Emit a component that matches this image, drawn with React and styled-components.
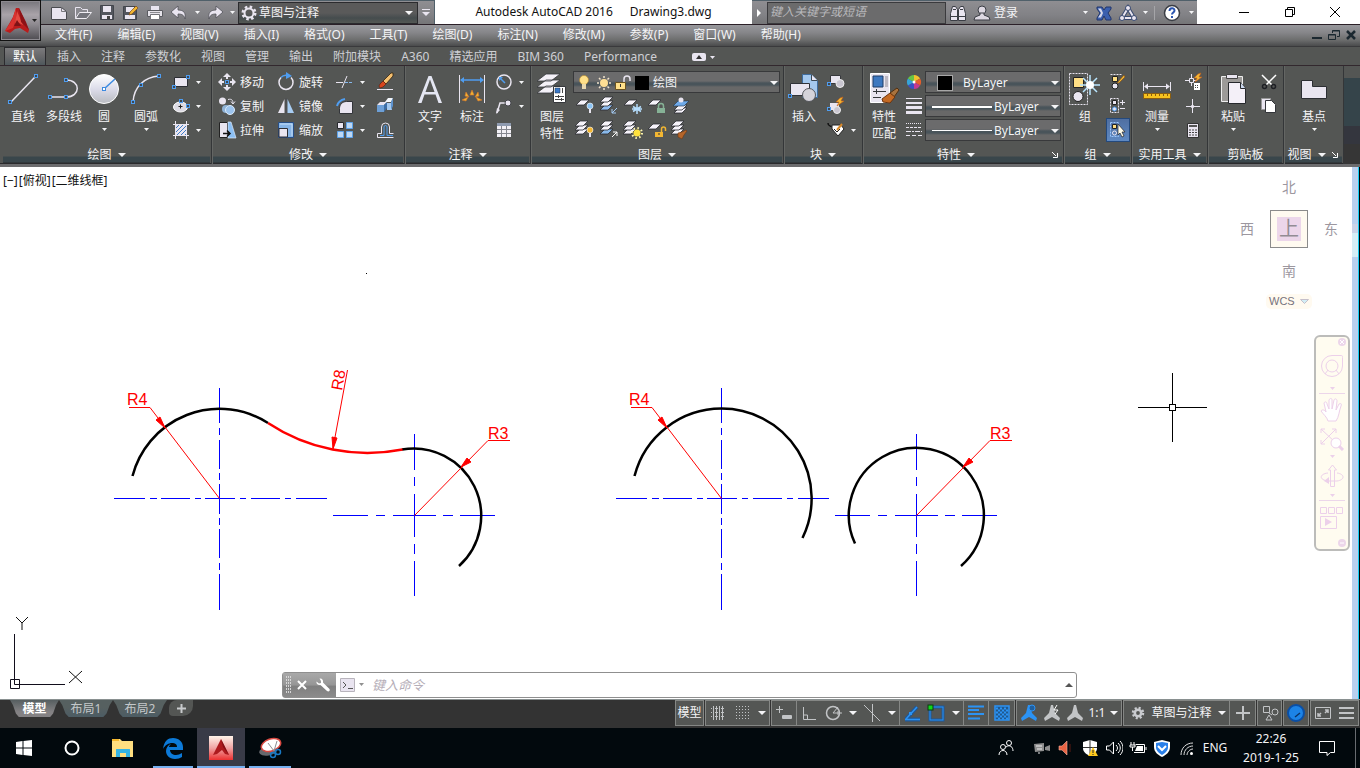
import React from "react";
import styled, { createGlobalStyle, css } from "styled-components";

const GlobalStyle = createGlobalStyle`
  * { box-sizing: border-box; }
  html, body { margin: 0; }
  body {
    font: 12px/16px "Noto Sans", "Noto Sans CJK SC", sans-serif;
    color: #f4f4f6;
    background: #545654;
  }
  button, input, select { font: inherit; color: inherit; }
`;

const INK = "#e9e5f0";
const BLUE = "#4f9df0";
const GOLD = "#f2b632";

/* ---------- shared parts ---------- */

const App = styled.div`
  min-height: 100vh;
  display: flex;
  flex-direction: column;
  overflow: hidden;
`;

const Button = styled.button`
  border: 0;
  padding: 0;
  background: none;
  display: flex;
  flex: none;
  align-items: center;
  justify-content: center;
  width: ${(p) => (p.$w ? `${p.$w}px` : "auto")};
  white-space: nowrap;
`;

const Drawn = styled.svg`
  display: block;
  flex: none;
  fill: none;
`;

function Ico({ w = 24, h = 24, children }) {
  return (
    <Drawn width={w} height={h} viewBox={`0 0 ${w} ${h}`} aria-hidden="true">
      {children}
    </Drawn>
  );
}

function Caret({ big, color = "#f4f4f6" }) {
  return big ? (
    <Ico w={8} h={4}><path d="M0 0h8L4 4z" fill={color} /></Ico>
  ) : (
    <Ico w={5} h={3}><path d="M0 0h5L2.5 3z" fill={color} /></Ico>
  );
}

/* ---------- header ---------- */

const Header = styled.header`
  display: grid;
  grid-template-columns: 41px 1fr;
  grid-template-rows: 25px 21px;
  background: linear-gradient(#98989c, #98989c 25px, #858588 33px, #6c6d6d 40px, #4a4b4c);
`;

const AppButton = styled(Button)`
  grid-row: 1 / 3;
  align-self: start;
  width: 41px;
  height: 41px;
  gap: 3px;
  border: 1px solid #111;
  box-shadow: inset 0 0 0 1px #8d8a90;
  background: linear-gradient(#77757b, #a9a3a9 35%, #8e8a90 60%, #4d4b50);
`;

const TitleBar = styled.div`
  display: flex;
  min-width: 0;
  background: #fff;
  border-bottom: 1px solid #2b2028;
`;

const barSkin = css`
  display: flex;
  align-items: center;
  border-top: 1px solid #50606a;
  background: linear-gradient(#8f8e92, #828286 60%, #757577);
`;

const QuickAccess = styled.div`
  ${barSkin}
  flex: none;
  width: 394px;
  padding-left: 6px;
  border-right: 1px solid #50606a;
`;

const Workspace = styled.label`
  display: flex;
  align-items: center;
  width: 180px;
  height: 22px;
  padding: 0 4px 0 2px;
  gap: 2px;
  border: 1px solid #2b2b2e;
  background: linear-gradient(#5a5a5a 0 50%, #454c4e 75%, #545854);
`;

const Select = styled.select`
  appearance: none;
  flex: 1;
  min-width: 0;
  border: 0;
  padding: 0;
  background: transparent;
  line-height: 16px;
`;

const Title = styled.h1`
  flex: 1;
  margin: 0;
  display: flex;
  align-items: center;
  justify-content: center;
  gap: 17px;
  font-size: 12px;
  font-weight: 400;
  color: #111;
  white-space: nowrap;
`;

const InfoCenter = styled.div`
  ${barSkin}
  flex: none;
  width: 445px;
`;

const Search = styled.input`
  width: 179px;
  height: 22px;
  border: 1px solid #3a3a3d;
  padding: 0 2px 2px;
  background: #6b6b6c;
  font-style: italic;
  &::placeholder { color: #b9b9bc; opacity: 1; }
`;

const Divider = styled.span`
  width: 1px;
  height: 14px;
  margin: 0 4px;
  background: #a5a5a8;
`;

const SignIn = styled(Button)`
  justify-content: flex-start;
  flex: 1;
`;

const WindowControls = styled.div`
  display: flex;
  flex: none;
  padding: 0 2px 0 24px;
  color: #111;
`;

const MenuBar = styled.nav`
  display: flex;
  align-items: center;
  padding: 0 0 1px 14px;
  gap: 25px;
`;

const MenuLink = styled.a`
  color: inherit;
  text-decoration: none;
  white-space: nowrap;
`;

const DocControls = styled.div`
  display: flex;
  margin-left: auto;
  gap: 2px;
  padding-right: 2px;
`;

/* ---------- ribbon ---------- */

const Tabs = styled.nav`
  display: flex;
  align-items: flex-end;
  height: 20px;
  padding-left: 4px;
  background: #545654;
  border-top: 1px solid #3a3a3c;
  border-bottom: 1px solid #32282e;
`;

const Tab = styled.button`
  height: 18px;
  padding: 0 ${(p) => (p.$on ? 8 : 10)}px;
  margin-right: ${(p) => (p.$on ? 1 : 0)}px;
  border: 1px solid ${(p) => (p.$on ? "#2b2b2e" : "transparent")};
  border-width: ${(p) => (p.$on ? "1px 1px 0" : "1px 0 0")};
  background: ${(p) => (p.$on ? "linear-gradient(#7b7b7d, #6a6a6c 45%, #4f585c)" : "none")};
  color: ${(p) => (p.$on ? "#fff" : "#cfd0d4")};
  line-height: 16px;
  white-space: nowrap;
`;

const Ribbon = styled.section`
  display: flex;
  height: 101px;
  padding-left: 2px;
  background: #545654;
  border-bottom: 3px solid #6c6c6e;
  box-shadow: inset 0 -1px #2a2a2c;
`;

const Panel = styled.section`
  flex: none;
  display: flex;
  flex-direction: column;
  width: ${(p) => p.$w}px;
  border-right: 1px solid #343638;
  box-shadow: 1px 0 #646664;
`;

const PanelBody = styled.div`
  flex: 1;
  display: flex;
  padding: 4px 0 0 ${(p) => p.$pad || 0}px;
`;

const PanelFoot = styled.footer`
  display: flex;
  align-items: center;
  height: 19px;
  margin: 0 1px;
  background: linear-gradient(#545654 0 11px, #39464b 12px 17px, #2a2a2c 18px);
`;

const PanelTitle = styled(Button)`
  flex: 1;
  gap: 6px;
`;

const Filler = styled.div`
  flex: 1;
  background: linear-gradient(#545654 12px, #35444a 12px 60px, #34363e 60px 78px, #363636 78px);
`;

const BigButton = styled.button`
  flex: none;
  display: flex;
  flex-direction: column;
  align-items: center;
  width: ${(p) => p.$w}px;
  padding: 0;
  border: 0;
  background: none;
  line-height: 17px;
  white-space: nowrap;
`;

const BigArt = styled.span`
  display: flex;
  align-items: center;
  height: 38px;
`;

const CaretRow = styled.span`
  display: flex;
  align-items: center;
  height: 8px;
`;

const Column = styled.div`
  display: flex;
  flex-direction: column;
  flex: none;
  margin-left: ${(p) => p.$gap || 0}px;
`;

const Row = styled.div`
  display: flex;
  align-items: center;
  height: 24px;
`;

const ToolButton = styled.button`
  display: flex;
  align-items: center;
  width: ${(p) => p.$w || 24}px;
  height: 24px;
  padding: 0;
  gap: 1px;
  border: 0;
  outline: ${(p) => (p.$on ? "1px solid #24497c" : "none")};
  outline-offset: -1px;
  background: ${(p) => (p.$on ? "linear-gradient(#4f6ea0, #5f8ac4)" : "none")};
  white-space: nowrap;
`;

const ToolText = styled.span`
  padding-top: 2px;
`;

const Combo = styled.label`
  display: flex;
  align-items: center;
  width: ${(p) => p.$w}px;
  height: 22px;
  margin: 1px 0;
  padding: 1px 1px 0 ${(p) => p.$pad || 6}px;
  gap: ${(p) => p.$gap || 2}px;
  border: 1px solid #38393b;
  background: linear-gradient(#6b6b6c 0 45%, #49545a 55% 65%, #686868 75%);
`;

const Swatch = styled.span`
  flex: none;
  width: ${(p) => p.$s}px;
  height: ${(p) => p.$s}px;
  margin-right: 2px;
  border: 1px solid ${(p) => p.$edge || "#000"};
  background: #000;
`;

const Stroke = styled.span`
  flex: none;
  width: 60px;
  height: ${(p) => p.$h}px;
  background: #fff;
`;

/* ---------- drawing area ---------- */

const Workarea = styled.main`
  position: relative;
  flex: 1 0 532px;
  display: flex;
  background: #fff;
  color: #111;
`;

const Viewport = styled.div`
  position: relative;
  flex: 1;
`;

const Model = styled.svg`
  position: absolute;
  inset: 0;
  width: 100%;
  height: 100%;
  font-family: "Liberation Sans", Arial, sans-serif;
`;

const ViewLabel = styled.button`
  position: absolute;
  top: 6px;
  left: 3px;
  display: flex;
  gap: 1px;
  padding: 0;
  border: 0;
  background: none;
  line-height: 16px;
`;

const Ucs = styled.div`
  position: absolute;
  left: 8px;
  bottom: 9px;
`;

const ScrollStrip = styled.div`
  flex: none;
  width: 8px;
  border-right: 1px solid #000;
  box-shadow: inset -1px 0 #16cdf3;
  background: linear-gradient(#b8d0ee 57px, #c9d3e8 57px 66px, #d4eef6 66px 90px, #b8d0ee 90px);
`;

const Compass = styled.div`
  position: absolute;
  top: 9px;
  right: 11px;
  display: grid;
  grid-template-columns: 20px 64px 20px;
  grid-template-rows: 22px 62px 22px;
  place-items: center;
  color: #9c979f;
  font-size: 14px;
`;

const Dir = styled.button`
  grid-area: ${(p) => p.$at};
  padding: 0;
  border: 0;
  background: none;
  font-size: 14px;
`;

const CubeFace = styled.button`
  grid-area: 2 / 2;
  width: 38px;
  height: 38px;
  padding: 6px;
  border: 1px solid #8b8b8b;
  background: #fffaf0;
`;

const CubeText = styled.span`
  display: block;
  background: #ecd6ea;
  color: #928c94;
  font-size: 20px;
  line-height: 24px;
`;

const Wcs = styled.button`
  position: absolute;
  top: 127px;
  right: 40px;
  display: flex;
  align-items: center;
  gap: 5px;
  width: 46px;
  height: 15px;
  padding: 0 3px;
  border: 0;
  border-radius: 5px;
  background: #fffaf0;
  color: #77727c;
  font: 11px/15px "Liberation Sans", Arial, sans-serif;
`;

const NavBar = styled.nav`
  position: absolute;
  top: 168px;
  right: 2px;
  display: flex;
  flex-direction: column;
  align-items: center;
  width: 36px;
  height: 216px;
  border: 2px solid #bcbcba;
  border-radius: 6px;
  background: #fffcf0;
`;

const NavButton = styled.button`
  display: flex;
  align-items: center;
  justify-content: ${(p) => (p.$end ? "flex-end" : "center")};
  width: 100%;
  height: ${(p) => p.$h}px;
  padding: 0;
  border: 0;
  background: none;
`;

const NavRule = styled.span`
  flex: none;
  width: 26px;
  height: 1px;
  background: #ecd6ea;
`;

const CommandLine = styled.form`
  position: absolute;
  left: 282px;
  right: 275px;
  bottom: 1px;
  display: flex;
  align-items: center;
  height: 26px;
  border: 1px solid #8f8f8f;
  border-radius: 3px;
  background: #fff;
`;

const CommandGrip = styled.div`
  display: flex;
  align-items: center;
  align-self: stretch;
  width: 53px;
  background: linear-gradient(#a9a9a9, #969696 50%, #7f7f7f 55%, #8b8b8b);
`;

const CommandInput = styled.input`
  flex: 1;
  min-width: 0;
  border: 0;
  padding: 0 4px;
  background: none;
  font-size: 13px;
  font-style: italic;
  &::placeholder { color: #b5aeb8; opacity: 1; }
`;

/* ---------- status bar ---------- */

const StatusBar = styled.footer`
  display: flex;
  justify-content: space-between;
  height: 29px;
  background: #333;
  border-top: 1px solid #899090;
`;

const Layouts = styled.nav`
  display: flex;
  padding-left: 10px;
`;

const LayoutTab = styled.button`
  width: ${(p) => p.$w}px;
  height: 17px;
  padding: 0;
  border: 0;
  clip-path: polygon(0 0, 100% 0, 94% 30%, 88% 80%, 82% 100%, 18% 100%, 12% 80%, 6% 30%);
  background: ${(p) => (p.$on ? "linear-gradient(#565e60, #848284 70%)" : "linear-gradient(#566060 45%, #4c5c64)")};
  color: ${(p) => (p.$on ? "#fff" : "#c4c8ca")};
  font-weight: ${(p) => (p.$on ? 700 : 400)};
  line-height: 16px;
`;

const AddTab = styled(Button)`
  width: 24px;
  height: 16px;
  margin-left: 2px;
  border-radius: 8px 0 10px 4px;
  background: #545654;
`;

const Toggles = styled.div`
  display: flex;
  padding: 0 1px 1px 0;
`;

const ToggleGroup = styled.div`
  display: flex;
  align-items: center;
  justify-content: space-around;
  flex: none;
  width: ${(p) => p.$w}px;
  height: 26px;
  margin-left: ${(p) => (p.$join ? -1 : 1)}px;
  padding-left: ${(p) => p.$pad || 0}px;
  border: 1px solid #858785;
  background: #545654;
`;

/* ---------- taskbar ---------- */

const Taskbar = styled.footer`
  display: flex;
  height: 40px;
  background: #02090d;
`;

const Task = styled.button`
  position: relative;
  display: flex;
  align-items: center;
  justify-content: center;
  width: ${(p) => p.$w || 48}px;
  padding: 0;
  border: 0;
  background: ${(p) => (p.$on ? "#393b47" : "none")};
  &::after {
    content: "";
    position: absolute;
    right: ${(p) => (p.$on ? 0 : 4)}px;
    bottom: 0;
    left: ${(p) => (p.$on ? 0 : 4)}px;
    height: 2px;
    background: ${(p) => (p.$open || p.$on ? "#76b0f0" : "none")};
  }
`;

const Tray = styled.div`
  display: flex;
  align-items: center;
  margin-left: auto;
`;

const Clock = styled.time`
  width: 78px;
  text-align: center;
  line-height: 19px;
`;

const DesktopEdge = styled.span`
  width: 5px;
  height: 40px;
  margin-left: 11px;
  border-left: 1px solid #686c70;
`;

/* ---------- icons ---------- */

const Node = ({ x, y }) => (
  <rect x={x - 1.5} y={y - 1.5} width="3" height="3" fill="#3f4750" stroke={BLUE} />
);
const Sheet = ({ x, y, fill = "#f6f3fa" }) => (
  <path d={`M${x + 5} ${y}h8l-5 5h-8z`} fill={fill} stroke="#2b2c32" strokeWidth=".8" />
);
const Stack = ({ x = 3, y = 4, fill }) => (
  <g><Sheet x={x} y={y + 8} fill={fill} /><Sheet x={x} y={y + 4} /><Sheet x={x} y={y} /></g>
);
const Bulb = ({ x, y, c }) => (
  <g><circle cx={x} cy={y} r="3" fill={c} stroke="#fff" strokeWidth=".6" /><path d={`M${x - 1} ${y + 3}h2v4h-2z`} fill={INK} /></g>
);
const Bolt = ({ x, y }) => (
  <path d={`M${x + 4} ${y}l3-1-2 4h3l-7 5 2-4h-3z`} fill={GOLD} stroke="#c25a18" strokeWidth=".6" />
);
const Brush = ({ x, y }) => (
  <path d={`M${x} ${y + 3}l4-1 4-2 1 1-3 4-2 4-4-2z`} fill="#b5652a" stroke="#6d3712" strokeWidth=".6" />
);
const Dashed = ({ d, c = INK }) => <path d={d} stroke={c} strokeDasharray="2 1" />;

const Logo = ({ w = 24, h = 26 }) => (
  <Drawn width={w} height={h} viewBox="0 0 24 26" aria-hidden="true">
    <path d="M11 0h3l10 22-1 3-8-5-5 1-5 4-5-2L8 9z" fill="#b91c1c" />
    <path d="M11 0L7 12 0 23l8-3 3-8z" fill="#d8322f" />
    <path d="M12 3l-2 13 2-2 6 3z" fill="#e34b42" />
    <path d="M14 0l2 14 8 8-3-8z" fill="#8d1216" />
    <path d="M12 12l4 6H9z" fill="#7d1316" />
  </Drawn>
);

const icons = {
  new: <Ico><path d="M4.500 6.500h10l5 4v8h-15z" fill={INK} stroke="#4a4b50" /><path d="M14.500 6.500v4h5" stroke="#77777c" /></Ico>,
  open: <Ico><path d="M4.500 17.500v-11h5l2 2h5v3" fill="#8a8a90" stroke={INK} /><path d="M4.500 17.500l4-6h12l-5 6z" fill="#74757c" stroke="#f0eef4" /></Ico>,
  save: <Ico><path d="M5.500 4.500h13v14h-13z" fill="#53565e" stroke="#42454c" /><path d="M8 5h8v6H8z" fill={INK} /><path d="M7 14h10v4H7z" fill={INK} /><path d="M12 15h3v3h-3z" fill="#444" /></Ico>,
  saveAs: <Ico><path d="M4.500 5.500h13v13h-13z" fill="#53565e" stroke="#42454c" /><path d="M7 6h8v5H7zM6 14h10v4H6z" fill={INK} /><path d="M10 14l1-3 6-6 2 2-6 6z" fill={GOLD} stroke="#7c4a18" strokeWidth=".7" /></Ico>,
  print: <Ico><path d="M7.500 4.500h9v5h-9z" fill={INK} stroke="#85868c" /><path d="M4.500 9.500h15v6h-15z" fill="#e6e3ea" stroke="#5a5b60" /><path d="M7.500 13.500h9v5h-9z" fill="#fff" stroke="#73747a" /><path d="M7 11.500h10" stroke="#8a8b90" /></Ico>,
  undo: <Ico><path d="M11 5v4c6 0 8 3 7 9-1-4-3-5-7-5v4l-7-6z" fill={INK} stroke="#505158" strokeWidth=".8" /></Ico>,
  redo: <Ico><path d="M13 5v4c-6 0-8 3-7 9 1-4 3-5 7-5v4l7-6z" fill={INK} stroke="#505158" strokeWidth=".8" /></Ico>,
  gear: <Ico w={16} h={16}><circle cx="8" cy="8" r="6" stroke={INK} strokeWidth="3" strokeDasharray="2.4 2.3" /><circle cx="8" cy="8" r="4.500" stroke={INK} strokeWidth="2" /></Ico>,
  smallGear: <Ico w={14} h={14}><circle cx="7" cy="7" r="5" stroke="#c9cbcf" strokeWidth="2.500" strokeDasharray="2 1.930" /><circle cx="7" cy="7" r="3.200" stroke="#c9cbcf" strokeWidth="2.600" /></Ico>,
  play: <Ico w={15} h={24}><path d="M5 8v8l4-4z" fill="#fff" /></Ico>,
  more: <Ico w={8} h={8}><path d="M0 .5h8" stroke={INK} /><path d="M0 3h8L4 7z" fill={INK} /></Ico>,
  find: <Ico><path d="M4.500 19.500v-7l2-7h3l2 3v11zM12.500 19.500v-11l2-3h3l2 7v7z" fill={INK} stroke="#3a3d44" /><path d="M5 15.500h6M13 15.500h6M7 8.500h3M14 8.500h3" stroke="#3a3d44" /></Ico>,
  user: <Ico><circle cx="12" cy="9" r="4" fill="#ddd8e2" stroke="#3a3d44" /><path d="M10 12h4v2l5 2 1 3H4l1-3 5-2z" fill="#ddd8e2" stroke="#3a3d44" /></Ico>,
  exchange: <Ico><path d="M5 6h5l2 3 2-3h5v2l-3 4 3 5v2h-5l-2-4-2 4H5v-2l3-5-3-4z" fill="#3a5fae" stroke="#22366c" /><path d="M6 7.500h3l2 4.500-2 4.500H6l3-4.500z" fill="#d5d8ea" /></Ico>,
  triad: <Ico><path d="M12 7L6 17h12z" stroke="#394a70" strokeWidth="4" /><path d="M12 7L6 17h12z" stroke={INK} strokeWidth="2" /><circle cx="12" cy="7" r="2.500" fill={INK} stroke="#394a70" /><circle cx="6" cy="17" r="2.500" fill={INK} stroke="#394a70" /><circle cx="18" cy="17" r="2.500" fill={INK} stroke="#394a70" /></Ico>,
  help: <Ico><circle cx="12" cy="12" r="7.500" fill="#fff" stroke="#3a3d44" strokeWidth="1.500" /><path d="M9.500 10c0-3.500 5-3.500 5-.5 0 2-2.500 2-2.500 4M12 15v2" stroke="#2b55b0" strokeWidth="2" /></Ico>,

  line: <Ico w={32} h={34}><path d="M4 30L28 5" stroke={INK} strokeWidth="1.500" /><Node x={3} y={30} /><Node x={29} y={4} /></Ico>,
  pline: <Ico w={32} h={34}><path d="M3 25h15M18 8c15 0 15 17 0 17" stroke={INK} strokeWidth="1.500" /><Node x={2} y={25} /><Node x={18} y={25} /><Node x={18} y={8} /></Ico>,
  circle: <Ico w={34} h={34}><defs><linearGradient id="disc" x2="0" y2="1"><stop offset="0" stopColor="#fff" /><stop offset=".5" stopColor="#dcdcea" /><stop offset="1" stopColor="#b9bbc0" /></linearGradient></defs><circle cx="17" cy="17" r="14.500" fill="url(#disc)" stroke="#fff" /><path d="M17 17L28 7" stroke="#3c8ae0" strokeWidth="1.500" /><rect x="15.500" y="15.500" width="3" height="3" fill="#fff" stroke="#3c8ae0" /></Ico>,
  arc: <Ico w={32} h={34}><path d="M3 30C4 15 14 5 29 4" stroke={INK} strokeWidth="1.500" /><Node x={3} y={30} /><Node x={11} y={13} /><Node x={29} y={4} /></Ico>,
  rect: <Ico><path d="M5.500 7.500h13v9h-13z" fill={INK} stroke="#2b2d33" /><Node x={5} y={17} /><Node x={19} y={7} /></Ico>,
  ellipse: <Ico><ellipse cx="11.500" cy="13" rx="7" ry="5" fill="#dddbe4" stroke="#fff" /><path d="M9.500 12.500h4M11.500 10.500v4" stroke="#222" /><Node x={12} y={7} /><Node x={19} y={12} /></Ico>,
  hatch: <Ico><path d="M7 7h10v10H7z" fill="#e9e5f0" /><path d="M7 10l3-3M7 14l7-7M8 17l9-9M12 17l5-5M16 17l1-1" stroke="#3f7cc4" /><path d="M6.500 3v18M17.500 3v18M4 6.500h16M4 17.500h16" stroke={INK} /></Ico>,
  move: <Ico><path d="M12 6v3M12 15v3M6 12h3M15 12h3" stroke={INK} strokeWidth="2" /><path d="M12 3l-4 4h8zM12 21l-4-4h8zM3 12l4-4v8zM21 12l-4-4v8z" fill={INK} /><Node x={12} y={12} /></Ico>,
  copy: <Ico><circle cx="7.500" cy="7" r="3.500" fill={INK} /><circle cx="11" cy="15" r="4" fill="#8fb2d6" /><circle cx="15" cy="16" r="4.500" fill="#9cc4ee" stroke="#dcebfa" /><path d="M13 5.500c4-1 5 1 5 4M16 7.500l2 2.500 2-2.500" stroke={INK} /></Ico>,
  stretch: <Ico><path d="M4.500 4.500h8v15h-8z" fill={INK} stroke="#222" /><path d="M13 4h3l5 16h-8z" fill="#8cc0f4" stroke="#dceafa" strokeWidth=".7" /><path d="M8 15.500h6M12 12.500l3 3-3 3" stroke="#111" strokeWidth="1.500" /></Ico>,
  rotate: <Ico><path d="M7 7.500A7 7 0 1 0 17 7.500" stroke={INK} strokeWidth="1.500" /><path d="M7 7.500C9 5 12 5 14 5.500" stroke={BLUE} strokeWidth="1.500" /><path d="M12 2l6 4-6 3z" fill={BLUE} /></Ico>,
  mirror: <Ico><path d="M10.500 5v14H4z" fill={INK} /><path d="M13.500 5v14H20z" fill="#a8cdf3" /><path d="M12 4v16" stroke="#4c4d52" /></Ico>,
  scale: <Ico><path d="M4.500 4.500h15v15h-15z" fill="#86b4e6" stroke="#284f86" /><path d="M5 10.500h8.500V19H5z" fill={INK} stroke="#2e2f34" /><path d="M6 6h12v12" stroke="#c6def6" /></Ico>,
  trim: <Ico><path d="M3 12.500h7M9 18l5-12" stroke={INK} /><path d="M12 12.500h8" stroke="#86b8ec" strokeDasharray="3 1" /></Ico>,
  fillet: <Ico><path d="M6.500 19.500v-5c0-4 3-7 7-7h6v12z" fill={INK} stroke="#33353a" /><path d="M4 12c1-4 3-6 8-7" stroke={BLUE} strokeWidth="2" /></Ico>,
  array: <Ico><path d="M4.500 4.500h6v6h-6z" fill={INK} stroke="#26282c" /><path d="M13.500 4.500h6v6h-6zM4.500 13.500h6v6h-6zM13.500 13.500h6v6h-6z" fill="#bed8f4" stroke="#5ea3ea" /></Ico>,
  erase: <Ico><path d="M4 19.500h16" stroke={INK} /><path d="M10 11L18 3h2v3l-7 8z" fill="#f5c070" stroke="#33230f" strokeWidth=".8" /><path d="M7 14l3-3 3 3-3 3-3 1-1-2z" fill="#d8451d" stroke="#5b1b0b" strokeWidth=".6" /></Ico>,
  explode: <Ico><path d="M4 11h7v7H4z" fill="#6d9fd6" /><path d="M4 11l3-3h7l-3 3z" fill={INK} /><path d="M11 11l3-3v6l-3 4z" fill="#3d6fa8" /><path d="M14 9h5v7h-5z" fill="#a4c8ee" /><path d="M12 8l3-4h5l-2 4z" fill="#f4f7fb" /><path d="M18 8l2-4v8l-2 4z" fill="#5d93cf" /></Ico>,
  offset: <Ico><path d="M4.500 19.500h16M4.500 19.500v-4h4V9a4 4 0 0 1 8 0v6.500h4" stroke={INK} /><path d="M7 17.500h4V9a1.500 1.500 0 0 1 3 0v8.500h6" stroke={BLUE} /></Ico>,
  text: <Ico w={32} h={34}><path d="M4 31L14.500 4h3L28 31h-3.500l-3-8.500h-11L7.500 31zM11.500 20h9L16 7.500z" fill="#e4e6f2" /></Ico>,
  dim: <Ico w={32} h={34}><path d="M3.500 3v28M28.500 3v28" stroke={INK} /><path d="M5 8h22" stroke={BLUE} strokeWidth="1.500" /><path d="M4 8l4-3v6zM28 8l-4-3v6z" fill={BLUE} /><path d="M16 18l2 5h-4zM10 20l3 5-4-1zM22 20l-3 5 4-1zM6 28l6-3-2 4zM26 28l-6-3 2 4z" fill={GOLD} stroke="#d9762a" strokeWidth=".6" /></Ico>,
  radius: <Ico><circle cx="12" cy="12" r="7" stroke={INK} strokeWidth="1.500" /><path d="M13 13L8 8" stroke={BLUE} strokeWidth="1.500" /><path d="M7 7h4l-4 4z" fill={BLUE} /></Ico>,
  leader: <Ico><path d="M5 19l3-10h6" stroke={INK} strokeWidth="1.500" /><path d="M4 20l1-6 3 2z" fill={INK} /><circle cx="16" cy="9" r="3" fill={INK} stroke="#44454a" /></Ico>,
  table: <Ico><path d="M5 5h14v14H5z" fill="#f3f1f6" /><path d="M5 5h14v3H5z" fill="#8f9bb0" /><path d="M5 11.500h14M5 15.500h14M9.500 8v11M14.500 8v11" stroke="#868890" /></Ico>,
  layers: <Ico w={34} h={34}><g stroke="#36383c" strokeWidth=".8" fill="#f4f1f8"><path d="M11 14h14l-9 7H2zM11 8h14l-9 7H2zM11 2h14l-9 7H2z" /></g><path d="M18.500 14.500h12v16h-12z" fill="#fff" stroke="#36383c" /><path d="M20 16h5v5h-5z" fill="#3a78c8" stroke="#234" strokeWidth=".5" /><path d="M27.500 16v5M20 24.500h9M20 27.500h9M23.500 23v3M26.500 26v3" stroke="#444" /></Ico>,
  lyOff: <Ico><Sheet x={3} y={6} /><Bulb x={17} y={12} c="#8cc4f4" /></Ico>,
  lyIso: <Ico><Stack x={3} y={3} fill="#8fbcf0" /><path d="M20 14l-5 5m0-4v4h4" stroke="#a4cbf4" /></Ico>,
  lyFreeze: <Ico><Sheet x={3} y={6} /><path d="M16 10v10M12 12.500l8 5M20 12.500l-8 5M11 15h10" stroke="#b4dcfc" strokeWidth="1.500" /></Ico>,
  lyLock: <Ico><Sheet x={3} y={6} /><path d="M13.500 14v-2a2.500 2.500 0 0 1 5 0v2" stroke="#86b296" strokeWidth="1.500" /><path d="M12 14h8v5h-8z" fill="#86b296" /></Ico>,
  lyCurrent: <Ico><Sheet x={5} y={14} /><Sheet x={5} y={11} /><path d="M9 7h11l-5 5H4z" fill="#6faaea" stroke="#234" strokeWidth=".6" /><circle cx="12" cy="6" r="2.500" fill={INK} /></Ico>,
  lyOn: <Ico><Stack x={2} y={3} /><Bulb x={17} y={12} c={GOLD} /></Ico>,
  lyUniso: <Ico><Stack x={3} y={3} fill="#89b9ea" /><path d="M15 19l5-5m-4 0h4v4" stroke="#fff" /></Ico>,
  lyThaw: <Ico><Stack x={2} y={3} /><circle cx="16" cy="15" r="5" stroke="#fff7b0" strokeDasharray="1.500 2.400" strokeWidth="2" /><circle cx="16" cy="15" r="3.500" fill="#ffe23d" /></Ico>,
  lyUnlock: <Ico><Sheet x={3} y={6} /><path d="M16.500 14v-3a2 2 0 0 1 4 0v2" stroke={GOLD} strokeWidth="1.500" /><path d="M10 14h8v5h-8z" fill={GOLD} /><path d="M14 15v2" stroke="#333" /></Ico>,
  lyMatch: <Ico><Stack x={2} y={3} /><Brush x={9} y={12} /></Ico>,
  bulb: <Ico w={18} h={20}><circle cx="9" cy="7" r="4.500" fill="#ffe08a" stroke="#b5882c" strokeWidth=".6" /><path d="M7 11h4v5H7z" fill="#e9d9b0" /></Ico>,
  sun: <Ico w={18} h={20}><circle cx="9" cy="10" r="4" fill="#ffdf94" /><path d="M9 3v2M9 15v2M2 10h2M14 10h2M4 5l1.500 1.500M12.500 13.500L14 15M14 5l-1.500 1.500M4 15l1.500-1.500" stroke="#f0e2cc" strokeWidth="1.500" /></Ico>,
  unlock: <Ico w={18} h={20}><path d="M9 9V6a3 3 0 0 1 6 0v2" stroke={INK} strokeWidth="1.500" /><path d="M.5 9.500h10v7H.5z" fill="#ffe08a" stroke="#6b5320" /><path d="M5.500 11v3" stroke="#333" /></Ico>,
  insert: <Ico w={34} h={34}><path d="M15.500 2.500h9l6 6v17h-15z" fill="#a4c8ee" stroke="#3f6c9e" /><path d="M24.500 2.500v6h6" fill={INK} stroke="#3b4854" /><path d="M3.500 11.500h19v12h-19z" fill={INK} stroke="#303238" /><circle cx="22" cy="23" r="6.500" fill="#d5d3da" stroke="#55575c" /><Node x={3} y={24} /></Ico>,
  block: <Ico><path d="M6.500 5.500h10v8h-10z" fill={INK} stroke="#36383c" /><circle cx="16" cy="13.500" r="4" fill="#c9c6d0" stroke="#eee" /><Node x={5} y={14} /></Ico>,
  blockEdit: <Ico><path d="M6 9h9v7H6z" fill={INK} /><circle cx="13" cy="16" r="3.500" fill="#c9c6d0" stroke="#eee" /><Node x={5} y={15} /><Bolt x={12} y={4} /></Ico>,
  attr: <Ico><path d="M4 5c0 4 3 2 3 4" stroke="#111" strokeWidth="1.500" /><path d="M8 7h9l3 4-6 7-6-7z" fill="#fff" stroke="#222" /><path d="M10 11l3 3 3-3" stroke="#222" /><path d="M13 12l5-6" stroke="#d98a2a" strokeWidth="2" /></Ico>,
  matchProp: <Ico w={34} h={34}><path d="M3.500 1.500h19v29h-19z" fill={INK} stroke="#fff" /><path d="M6 4h10v11H6z" fill="#3d78c0" stroke="#1e3c66" /><path d="M18 4h3v11h-3z" fill="#bcb8c2" /><path d="M6 19.500h13M6 25.500h8M9.500 17v5" stroke="#36383c" /><path d="M23 21l7-5 2 2-5 7z" fill="#a9733e" stroke="#53300f" /><path d="M15 27l8-6 5 4-5 6-7-1z" fill="#c46a24" stroke="#6b3510" /></Ico>,
  wheel: <Ico w={18}><g transform="translate(9 12)"><path d="M0 0V-7A7 7 0 0 1 6.100-3.500z" fill="#f2c12e" /><path d="M0 0L6.100-3.500A7 7 0 0 1 6.100 3.500z" fill="#e8602c" /><path d="M0 0L6.100 3.500A7 7 0 0 1 0 7z" fill="#c43a90" /><path d="M0 0V7A7 7 0 0 1-6.100 3.500z" fill="#3a50c4" /><path d="M0 0L-6.100 3.500A7 7 0 0 1-6.100-3.500z" fill="#36a4d8" /><path d="M0 0L-6.100-3.500A7 7 0 0 1 0-7z" fill="#68c444" /><circle r="1.500" fill="#fff" /></g></Ico>,
  weights: <Ico w={18}><path d="M1 4.500h16" stroke={INK} /><path d="M1 9h16" stroke={INK} strokeWidth="2" /><path d="M1 13.500h16" stroke={INK} strokeWidth="3" /><path d="M1 18.500h16" stroke={INK} strokeWidth="3" /></Ico>,
  types: <Ico w={18}><path d="M1 5.500h16" stroke={INK} strokeDasharray="1 1" /><path d="M1 9.500h16" stroke={INK} strokeDasharray="3 1" /><path d="M1 13.500h16" stroke={INK} strokeDasharray="5 1 2 1" /><path d="M1 17.500h16" stroke={INK} strokeDasharray="4 2" /></Ico>,
  group: <Ico w={34} h={34}><Dashed d="M1.500 1.500h18v31h-18z" /><path d="M5.500 5.500h10v10h-10z" fill="#ffdf84" stroke="#222" /><circle cx="10" cy="24.500" r="5" fill={INK} stroke="#222" /><path d="M22 3v20M12 13h20M15 6l14 14M29 6L15 20" stroke="#b9e6ff" strokeWidth="1.500" /><circle cx="22" cy="13" r="4" fill="#fff" /></Ico>,
  ungroup: <Ico><Dashed d="M4.500 4.500h12" /><path d="M6.500 6.500h5v5h-5z" fill="#ffdf84" stroke="#222" /><circle cx="9" cy="16" r="3" fill={INK} stroke="#222" /><path d="M11 13l7-8 1 2-6 6z" fill={GOLD} stroke="#7b4718" strokeWidth=".6" /></Ico>,
  groupEdit: <Ico><Dashed d="M4.500 4.500h8v14h-8z" /><path d="M6.500 6.500h4v4h-4z" fill={INK} stroke="#222" /><circle cx="8.500" cy="15" r="2" fill={INK} stroke={BLUE} /><path d="M14 8.500h5M16.500 6v5M14 14.500h5" stroke={INK} /></Ico>,
  groupSel: <Ico><Dashed d="M4.500 4.500h8v14h-8z" c="#9cc8ff" /><path d="M6.500 6.500h4v4h-4z" fill="#ffdf84" stroke="#222" /><circle cx="8.500" cy="15" r="2" stroke={INK} /><path d="M12 6l7 8-3 0 2 4-2 1-2-4-2 2z" fill="#fffbe8" stroke="#222" strokeWidth=".7" /></Ico>,
  measure: <Ico w={32} h={34}><path d="M2.500 10v9M29.500 10v9M4 14.500h24" stroke={INK} /><path d="M3 14.500l4-3v6zM29 14.500l-4-3v6z" fill={INK} /><path d="M2.500 21.500h27v5h-27z" fill="#f7c21e" stroke="#8a5d10" /><path d="M6.500 22v2M10.500 22v2M14.500 22v2M18.500 22v2M22.500 22v2M26.500 22v2" stroke="#8a5d10" /></Ico>,
  quickSel: <Ico><path d="M10.500 4v12M4 10.500h12" stroke={INK} /><path d="M8.500 8.500h4v4h-4z" fill="#545654" stroke={INK} /><path d="M13 13h6v7h-6z" fill="#fff" /><path d="M14 15.500h4M14 17.500h4" stroke="#444" strokeDasharray="1 1" /><Bolt x={13} y={4} /></Ico>,
  point: <Ico><path d="M11.500 5v14M5 12.500h14" stroke={INK} /><path d="M10.500 11.500h2v2h-2z" stroke={INK} /></Ico>,
  calc: <Ico><path d="M6.500 5.500h11v14h-11z" fill={INK} stroke="#333" /><path d="M8 7h8v2H8z" fill="#555" /><path d="M8 12h8M8 14.500h8M8 17h8" stroke="#444" strokeDasharray="2 1" /></Ico>,
  paste: <Ico w={32} h={34}><path d="M4.500 4.500h21v25h-21z" fill="#9c9a98" stroke="#eee" /><path d="M9.500 2.500h11v4h-11z" fill={INK} stroke="#444" /><path d="M11.500 10.500h12l5 6v15h-17z" fill="#f4f0f8" stroke="#26282c" /><path d="M23.500 10.500v6h5" fill="#ccd8ee" stroke="#26282c" /></Ico>,
  cut: <Ico><path d="M5 5l10 10M19 5L9 15" stroke="#fff" strokeWidth="1.500" /><circle cx="7.500" cy="16.500" r="2" stroke="#1e1f24" strokeWidth="1.500" /><circle cx="16.500" cy="16.500" r="2" stroke="#1e1f24" strokeWidth="1.500" /></Ico>,
  copyClip: <Ico><path d="M4.500 4.500h9v11h-9z" fill={INK} stroke="#999" /><path d="M8.500 6.500h6l4 4v8h-10z" fill="#fff" stroke="#33353a" /></Ico>,
  base: <Ico w={32} h={34}><path d="M3.500 8.500h11v6h14v12h-25z" fill={INK} stroke="#2c2e33" /></Ico>,
};

/* ---------- composed parts ---------- */

function Big({ icon, w, label, caret }) {
  return (
    <BigButton $w={w}>
      <BigArt>{icons[icon]}</BigArt>
      {label.map((t) => <span key={t}>{t}</span>)}
      {caret && <CaretRow><Caret /></CaretRow>}
    </BigButton>
  );
}

function Tool({ icon, text, w, caret, on }) {
  return (
    <Row>
      <ToolButton $w={w} $on={on} aria-label={text || icon}>
        {icons[icon]}
        {text && <ToolText>{text}</ToolText>}
      </ToolButton>
      {caret && <Button $w={10} aria-label="more"><Caret /></Button>}
    </Row>
  );
}

function RibbonPanel({ title, w, pad, caret = true, launcher, children }) {
  return (
    <Panel $w={w}>
      <PanelBody $pad={pad}>{children}</PanelBody>
      <PanelFoot>
        <PanelTitle>{title}{caret && <Caret big />}</PanelTitle>
        {launcher && (
          <Button $w={14} aria-label="launcher">
            <Ico w={8} h={8}><path d="M1 1l4 4M6.500 2v4.500H2" stroke="#fff" /></Ico>
          </Button>
        )}
      </PanelFoot>
    </Panel>
  );
}

function ByLayer({ label, children, pad, gap }) {
  return (
    <Combo $w={136} $pad={pad} $gap={gap}>
      {children}
      <Select aria-label={label}><option>ByLayer</option></Select>
      <Caret big />
    </Combo>
  );
}

const menus = ["文件(F)", "编辑(E)", "视图(V)", "插入(I)", "格式(O)", "工具(T)", "绘图(D)", "标注(N)", "修改(M)", "参数(P)", "窗口(W)", "帮助(H)"];
const tabs = ["默认", "插入", "注释", "参数化", "视图", "管理", "输出", "附加模块", "A360", "精选应用", "BIM 360", "Performance"];

function TopBar() {
  return (
    <Header>
      <AppButton aria-label="AutoCAD"><Logo /><Caret color="#222" /></AppButton>
      <TitleBar>
        <QuickAccess>
          {["new", "open", "save", "saveAs", "print", "undo"].map((n) => (
            <Button key={n} $w={24} aria-label={n}>{icons[n]}</Button>
          ))}
          <Button $w={12} aria-label="undo list"><Caret /></Button>
          <Button $w={24} aria-label="redo">{icons.redo}</Button>
          <Button $w={11} aria-label="redo list"><Caret /></Button>
          <Workspace>
            {icons.gear}
            <Select aria-label="工作空间"><option>草图与注释</option></Select>
            <Caret big />
          </Workspace>
          <Button $w={16} aria-label="customize">{icons.more}</Button>
        </QuickAccess>
        <Title><span>Autodesk AutoCAD 2016</span><span>Drawing3.dwg</span></Title>
        <InfoCenter>
          <Button $w={15} aria-label="expand">{icons.play}</Button>
          <Search aria-label="搜索" placeholder="键入关键字或短语" />
          <Button $w={24} aria-label="find">{icons.find}</Button>
          <SignIn>{icons.user}登录</SignIn>
          <Button $w={14} aria-label="account"><Caret /></Button>
          <Button $w={24} aria-label="exchange">{icons.exchange}</Button>
          <Button $w={24} aria-label="A360">{icons.triad}</Button>
          <Button $w={10} aria-label="A360 list"><Caret /></Button>
          <Divider />
          <Button $w={26} aria-label="help">{icons.help}</Button>
          <Button $w={12} aria-label="help list"><Caret /></Button>
        </InfoCenter>
        <WindowControls>
          <Button $w={46} aria-label="minimize"><Ico w={12} h={12}><path d="M1 6.500h10" stroke="#000" /></Ico></Button>
          <Button $w={45} aria-label="restore"><Ico w={12} h={12}><path d="M1.500 3.500h7v7h-7zM3.500 3v-1.500h7v7H9" stroke="#000" /></Ico></Button>
          <Button $w={46} aria-label="close"><Ico w={12} h={12}><path d="M1 1l10 10M11 1L1 11" stroke="#000" /></Ico></Button>
        </WindowControls>
      </TitleBar>
      <MenuBar>
        {menus.map((m) => <MenuLink key={m} href="#">{m}</MenuLink>)}
        <DocControls>
          <Button $w={14} aria-label="minimize drawing"><Ico w={12} h={12}><path d="M1 9h10" stroke="#1b2830" strokeWidth="2" /></Ico></Button>
          <Button $w={16} aria-label="restore drawing"><Ico w={12} h={12}><path d="M.5 5.500h7v5h-7zM4.500 4V1.500h7v6H9M.5 6h7M4.500 2h7" stroke="#1b2830" /></Ico></Button>
          <Button $w={14} aria-label="close drawing"><Ico w={10} h={12}><path d="M1 2l8 8M9 2l-8 8" stroke="#1b2830" strokeWidth="2.500" /></Ico></Button>
        </DocControls>
      </MenuBar>
    </Header>
  );
}

function RibbonArea() {
  return (
    <>
      <Tabs>
        {tabs.map((t, i) => <Tab key={t} $on={i === 0}>{t}</Tab>)}
        <Tab aria-label="minimize ribbon">
          <Ico w={46} h={14}><rect x="15" y="3" width="14" height="8" rx="2" fill={INK} /><path d="M19 9h6l-3-4z" fill="#333" /><path d="M33 6h5l-2.500 3z" fill={INK} /></Ico>
        </Tab>
      </Tabs>
      <Ribbon>
        <RibbonPanel title="绘图" w={210} pad={1}>
          <Big icon="line" w={40} label={["直线"]} />
          <Big icon="pline" w={42} label={["多段线"]} />
          <Big icon="circle" w={38} label={["圆"]} caret />
          <Big icon="arc" w={46} label={["圆弧"]} caret />
          <Column>
            <Tool icon="rect" caret /><Tool icon="ellipse" caret /><Tool icon="hatch" caret />
          </Column>
        </RibbonPanel>
        <RibbonPanel title="修改" w={193} pad={3}>
          <Column>
            <Tool icon="move" text="移动" w={59} /><Tool icon="copy" text="复制" w={59} /><Tool icon="stretch" text="拉伸" w={59} />
          </Column>
          <Column>
            <Tool icon="rotate" text="旋转" w={59} /><Tool icon="mirror" text="镜像" w={59} /><Tool icon="scale" text="缩放" w={59} />
          </Column>
          <Column>
            <Tool icon="trim" caret /><Tool icon="fillet" caret /><Tool icon="array" caret />
          </Column>
          <Column $gap={6}>
            <Tool icon="erase" /><Tool icon="explode" /><Tool icon="offset" />
          </Column>
        </RibbonPanel>
        <RibbonPanel title="注释" w={126} pad={1}>
          <Big icon="text" w={48} label={["文字"]} caret />
          <Big icon="dim" w={36} label={["标注"]} />
          <Column $gap={2}>
            <Tool icon="radius" caret /><Tool icon="leader" caret /><Tool icon="table" />
          </Column>
        </RibbonPanel>
        <RibbonPanel title="图层" w={253}>
          <Big icon="layers" w={42} label={["图层", "特性"]} />
          <Column>
            <Row>
              <Combo $w={207} $pad={1}>
                {icons.bulb}{icons.sun}{icons.unlock}
                <Swatch $s={14} />
                <Select aria-label="图层"><option>绘图</option></Select>
                <Caret big />
              </Combo>
            </Row>
            <Row>{["lyOff", "lyIso", "lyFreeze", "lyLock", "lyCurrent"].map((n) => <Tool key={n} icon={n} />)}</Row>
            <Row>{["lyOn", "lyUniso", "lyThaw", "lyUnlock", "lyMatch"].map((n) => <Tool key={n} icon={n} />)}</Row>
          </Column>
        </RibbonPanel>
        <RibbonPanel title="块" w={79}>
          <Big icon="insert" w={40} label={["插入"]} />
          <Column>
            <Tool icon="block" /><Tool icon="blockEdit" /><Tool icon="attr" caret />
          </Column>
        </RibbonPanel>
        <RibbonPanel title="特性" w={201} launcher>
          <Big icon="matchProp" w={42} label={["特性", "匹配"]} />
          <Column>
            <Tool icon="wheel" w={20} /><Tool icon="weights" w={20} /><Tool icon="types" w={20} />
          </Column>
          <Column>
            <ByLayer label="颜色" pad={11} gap={8}><Swatch $s={16} $edge="#a8a8a8" /></ByLayer>
            <ByLayer label="线宽"><Stroke $h={2} /></ByLayer>
            <ByLayer label="线型"><Stroke $h={1} /></ByLayer>
          </Column>
        </RibbonPanel>
        <RibbonPanel title="组" w={68}>
          <Big icon="group" w={42} label={["组"]} />
          <Column>
            <Tool icon="ungroup" /><Tool icon="groupEdit" /><Tool icon="groupSel" on />
          </Column>
        </RibbonPanel>
        <RibbonPanel title="实用工具" w={76} pad={1}>
          <Big icon="measure" w={48} label={["测量"]} caret />
          <Column>
            <Tool icon="quickSel" /><Tool icon="point" /><Tool icon="calc" />
          </Column>
        </RibbonPanel>
        <RibbonPanel title="剪贴板" w={76} pad={1} caret={false}>
          <Big icon="paste" w={48} label={["粘贴"]} caret />
          <Column>
            <Tool icon="cut" /><Tool icon="copyClip" />
          </Column>
        </RibbonPanel>
        <RibbonPanel title="视图" w={60} pad={1} launcher>
          <Big icon="base" w={58} label={["基点"]} caret />
        </RibbonPanel>
        <Filler />
      </Ribbon>
    </>
  );
}

const CenterLines = () => (
  <g stroke="#0000ff" shapeRendering="crispEdges">
    <path d="M219.500 388v35m0 5v7m0 5v29m0 4v7m0 4v30m0 4v7m0 4v29m0 5v7m0 4v36" />
    <path d="M114 498.500h31m5 0h7m4 0h29m5 0h6m4 0h30m5 0h6m5 0h29m5 0h6m5 0h31" />
    <path d="M414.500 434v36m0 7v9m0 8v43m0 7v10m0 7v35" />
    <path d="M333 515.500h35m8 0h9m8 0h43m7 0h10m7 0h35" />
  </g>
);

const RadiusDims = () => (
  <g>
    <path d="M129 407.500h21L219.500 498.500M510 440.500h-22L414.500 515.500" stroke="#ff0000" />
    <path d="M165 428l-9-8 4-3zM461 467l6-9 4 4z" fill="#ff0000" stroke="#ff0000" />
    <g fill="#ff0000" fontSize="16"><text x="127" y="405">R4</text><text x="488" y="439">R3</text></g>
  </g>
);

function Canvas() {
  return (
    <Workarea>
      <Viewport>
        <Model fill="none" role="img" aria-label="Drawing3">
          <g transform="translate(0 -167)">
            <CenterLines />
            <g stroke="#000" strokeWidth="2.500">
              <path d="M132.500 476A90 90 0 0 1 268 423" />
              <path d="M402 449.500A67.500 67.500 0 0 1 459 566" />
            </g>
            <path d="M268 423A180 180 0 0 0 402.500 449.500" stroke="#ff0000" strokeWidth="2.500" />
            <RadiusDims />
            <path d="M347.500 370L333 448" stroke="#ff0000" />
            <path d="M333 449l-1-12 5 1z" fill="#ff0000" stroke="#ff0000" />
            <text transform="translate(342 391) rotate(-80)" fontSize="16" fill="#ff0000">R8</text>
            <g transform="translate(502 0)">
              <CenterLines />
              <g stroke="#000" strokeWidth="2.500">
                <path d="M132.500 476A90 90 0 0 1 219.500 408.500A90 90 0 0 1 300.500 538" />
                <path d="M353 543.500A67.500 67.500 0 1 1 459 566" />
              </g>
              <RadiusDims />
            </g>
            <path d="M366 273.500h1" stroke="#000" />
            <g stroke="#000" shapeRendering="crispEdges">
              <path d="M1138 407.500h31m7 0h31M1172.500 373v31m0 7v31M1169.500 404.500h6v6h-6z" />
            </g>
          </g>
        </Model>
        <ViewLabel><span>[−]</span><span>[俯视]</span><span>[二维线框]</span></ViewLabel>
        <Ucs>
          <Ico w={76} h={76}>
            <path d="M6.500 20v50.500H57M2.500 65.500h9v9h-9z" stroke="#120e1c" />
            <path d="M8 3l6 6 6-6M14 9v7M61 57l13 12M74 57L61 69" stroke="#111" />
          </Ico>
        </Ucs>
        <Compass>
          <Dir $at="1 / 2">北</Dir>
          <Dir $at="2 / 1">西</Dir>
          <CubeFace><CubeText>上</CubeText></CubeFace>
          <Dir $at="2 / 3">东</Dir>
          <Dir $at="3 / 2">南</Dir>
        </Compass>
        <Wcs>WCS<Ico w={9} h={6}><path d="M.5.5h8l-4 4z" fill="#d2eef6" stroke="#c5bfca" /></Ico></Wcs>
        <NavBar aria-label="导航栏">
          <NavButton $h={10} $end aria-label="close"><Ico w={12} h={10}><circle cx="6" cy="5" r="4" fill="#ecd6ea" /><path d="M4 3l4 4M8 3L4 7" stroke="#fff" /></Ico></NavButton>
          <NavButton $h={37} aria-label="steering wheel"><Ico w={24} h={24}><path d="M12 1.500h9.500c1 0 1 1 1 2V12a10.500 10.500 0 1 1-10.500-10.500zM12 6a6 6 0 1 1 0 12 6 6 0 0 1 0-12zM8 16l-3 4M16 16l3 4" stroke="#ecd0ea" /></Ico></NavButton>
          <NavButton $h={9} aria-label="wheel list"><Caret color="#ecd0ea" /></NavButton>
          <NavRule />
          <NavButton $h={32} aria-label="pan"><Ico w={24} h={26}><path d="M8 24c-1-4-5-7-7-10 1-2 4-1 5 1L4 6c1-2 3-1 3 1l2 5V3c1-2 3-2 3 0v9l2-9c1-2 3-1 3 1l-1 9 3-6c2-1 3 0 2 2-2 5-2 11-5 15z" fill="#fff" stroke="#ecd0ea" /></Ico></NavButton>
          <NavButton $h={26} aria-label="zoom"><Ico w={26} h={24}><path d="M2 2l15 14M17 2L2 17M2 6V2h4M13 2h4v4M2 13v4h4" stroke="#ecd0ea" /><circle cx="17" cy="16" r="5" fill="#fff" stroke="#ecd0ea" /><path d="M20 19l4 4" stroke="#ecd0ea" strokeWidth="3" /></Ico></NavButton>
          <NavButton $h={8} aria-label="zoom list"><Caret color="#ecd0ea" /></NavButton>
          <NavButton $h={31} aria-label="orbit"><Ico w={24} h={24}><path d="M10.500 22.500V6h-2l4-5 4 5h-2v16.500zM8 9c-9 1-9 7 0 8h9c8-1 8-7 0-8" stroke="#ecd0ea" /><path d="M4 17l5-4v7z" fill="#ecd0ea" /></Ico></NavButton>
          <NavButton $h={9} aria-label="orbit list"><Caret color="#ecd0ea" /></NavButton>
          <NavRule />
          <NavButton $h={34} aria-label="showmotion"><Ico w={24} h={26}><path d="M.5 2.500h6v6h-6zM8.500 2.500h6v6h-6zM16.500 2.500h6v6h-6zM.5 11.500h16v12h-16z" stroke="#ecd0ea" /><path d="M5 13v8l7-4z" fill="#ecd0ea" /></Ico></NavButton>
          <NavButton $h={14} $end aria-label="options"><Ico w={12} h={10}><circle cx="6" cy="6" r="4" fill="#ecd6ea" /><path d="M4 6h4" stroke="#fff" /></Ico></NavButton>
        </NavBar>
        <CommandLine>
          <CommandGrip>
            <Ico w={11} h={20}><path d="M3.500 1v18M5.500 1v18M7.500 1v18" stroke="#d6d6d6" strokeDasharray="2 1" /></Ico>
            <Button type="button" $w={16} aria-label="close"><Ico w={10} h={10}><path d="M1 1l8 8M9 1L1 9" stroke="#fff" strokeWidth="2" /></Ico></Button>
            <Button type="button" $w={26} aria-label="settings"><Ico w={16} h={16}><path d="M4.500 1.500C7 1 8.500 3 8 5.500L14.500 12c1 2-1 3-2.500 2L5.500 8C3 8.500 1 7 1.500 4.500L4 6.500 6 6V4z" fill="#fff" /></Ico></Button>
          </CommandGrip>
          <Button type="button" $w={32} aria-label="recent commands">
            <Ico w={28} h={16}><path d="M2.500 1.500h14v13h-14z" fill="#e9e4f0" stroke="#b8b4bc" /><path d="M5 5l3 3-3 3M10 11.500h5" stroke="#555" /><path d="M21 6h5l-2.500 3z" fill="#909090" /></Ico>
          </Button>
          <CommandInput aria-label="命令" placeholder="键入命令" />
          <Button type="button" $w={14} aria-label="history"><Ico w={8} h={4}><path d="M0 4h8L4 0z" fill="#555" /></Ico></Button>
        </CommandLine>
      </Viewport>
      <ScrollStrip />
    </Workarea>
  );
}

const G = "#c2c4c6";
const B = "#2b93f5";
const St = ({ children, w = 18, label }) => <Button aria-label={label}><Ico w={w} h={18}>{children}</Ico></Button>;
const Person = ({ c = G }) => <path d="M8 1h2l2 8 5 5-1 3-7-4-7 4-1-3 5-5z" fill={c} />;

function Status() {
  return (
    <StatusBar>
      <Layouts>
        <LayoutTab $w={49} $on>模型</LayoutTab>
        <LayoutTab $w={54}>布局1</LayoutTab>
        <LayoutTab $w={54}>布局2</LayoutTab>
        <AddTab aria-label="add layout"><Ico w={9} h={9}><path d="M4.500 0v9M0 4.500h9" stroke="#c8cacc" strokeWidth="2" /></Ico></AddTab>
      </Layouts>
      <Toggles>
        <ToggleGroup $w={29}><Button>模型</Button></ToggleGroup>
        <ToggleGroup $w={65}>
          <St label="grid"><path d="M4.500 2v14M7.500 2v14M10.500 2v14M13.500 2v14" stroke={G} /><path d="M2 4.500h14M2 8.500h14M2 12.500h14" stroke={G} strokeDasharray="1 1" /></St>
          <St label="snap"><path d="M3 2.500h13M3 5.500h13M3 8.500h13M3 11.500h13M3 14.500h13" stroke={G} strokeDasharray="1 2" /></St>
          <Caret big />
        </ToggleGroup>
        <ToggleGroup $w={26}><St label="dynamic input"><path d="M1 5.500h7M4.500 2v7" stroke={G} /><rect x="7" y="11" width="10" height="4" rx="1" fill={G} /></St></ToggleGroup>
        <ToggleGroup $w={104} $join>
          <St label="ortho"><path d="M3.500 3v12.500H16M3.500 11h4v4" stroke={G} /></St>
          <St label="polar"><circle cx="8" cy="9" r="6.500" stroke={G} strokeWidth="1.500" /><path d="M8 9h9M8 9l5-6M13 7v4" stroke={G} /></St>
          <Caret big />
          <St label="isometric"><path d="M9.500 0v18M1 1l16 16" stroke={G} /></St>
          <Caret big />
        </ToggleGroup>
        <ToggleGroup $w={65} $join>
          <St label="tracking"><path d="M2 15.500h15M3 15L14 3" stroke="#1f5796" strokeWidth="4" /><path d="M2 15.500h15M3 15L14 3" stroke={B} strokeWidth="1.500" /><rect x="6" y="8" width="3" height="3" fill={B} /></St>
          <St label="osnap"><rect x="3" y="3" width="13" height="13" stroke="#1f5796" strokeWidth="3" /><rect x="3" y="3" width="13" height="13" stroke={B} /><rect x="1" y="1" width="5" height="5" fill="#10d818" stroke="#0b3a10" /></St>
          <Caret big />
        </ToggleGroup>
        <ToggleGroup $w={26} $join><St label="lineweight"><path d="M1 2.500h16M1 6h11M1 10h16M1 14.500h12" stroke={B} strokeWidth="2" /></St></ToggleGroup>
        <ToggleGroup $w={27} $join><St label="transparency"><rect x="2" y="2" width="14" height="14" fill="#21598f" stroke={B} strokeWidth="1.500" /><path d="M3 4.500h12M3 8.500h12M3 12.500h12" stroke={B} strokeDasharray="2 2" strokeWidth="2" /><path d="M5 6.500h10M5 10.500h10M5 14.500h10" stroke={B} strokeDasharray="2 2" strokeWidth="2" /></St></ToggleGroup>
        <ToggleGroup $w={106}>
          <St label="annotation visibility"><Person c={B} /><circle cx="12" cy="4" r="3" fill="#215f9d" stroke={B} /></St>
          <St label="autoscale"><Person /><path d="M14 1l-3 5h4l-3 4" stroke="#fff" /></St>
          <St label="annotation scale"><Person /></St>
          <Button>1:1</Button>
          <Caret big />
        </ToggleGroup>
        <ToggleGroup $w={107} $pad={4}>
          {icons.smallGear}
          <Button>草图与注释</Button>
          <Caret big />
        </ToggleGroup>
        <ToggleGroup $w={27} $join><St label="monitor"><path d="M9 2v14M2 9h14" stroke={G} strokeWidth="2" /></St></ToggleGroup>
        <ToggleGroup $w={25}><St label="isolate"><path d="M2.500 2.500h6v6h-6zM5 16l3-5 3 5zM8 9l3 2" stroke={G} /><circle cx="14" cy="8" r="3" stroke={G} /></St></ToggleGroup>
        <ToggleGroup $w={26}><St label="hardware acceleration"><circle cx="9" cy="9" r="8" fill="#1c83e6" stroke="#0a4fa6" strokeWidth="2" /><path d="M8 13l5-4" stroke="#0b3264" strokeWidth="1.500" /></St></ToggleGroup>
        <ToggleGroup $w={49}>
          <St label="clean screen"><path d="M1.500 3.500h15v11h-15z" stroke={G} /><path d="M4 12l3-3M4 9v3h3M14 6l-3 3M11 6h3v3" stroke={G} strokeWidth="1.500" /></St>
          <St label="customization"><path d="M2 4h15M2 9h15M2 14h15" stroke={G} strokeWidth="2" /></St>
        </ToggleGroup>
      </Toggles>
    </StatusBar>
  );
}

const TrayIcon = ({ label, children }) => <Button $w={24} aria-label={label}><Ico w={18} h={18}>{children}</Ico></Button>;

function WindowsBar() {
  return (
    <Taskbar>
      <Task aria-label="start"><Ico w={16} h={16}><path d="M0 2l6.500-1v6.500H0zM7.500 1L16 0v7.500H7.500zM0 8.500h6.500V15L0 14zM7.500 8.500H16V16l-8.500-1z" fill="#fff" /></Ico></Task>
      <Task aria-label="cortana"><Ico w={16} h={16}><circle cx="8" cy="8" r="6.500" stroke="#fff" strokeWidth="2" /></Ico></Task>
      <Task $w={53} aria-label="explorer"><Ico w={22} h={20}><path d="M0 1h8l2 2h11v16H0z" fill="#ffdf80" /><path d="M0 1h7v2H0z" fill="#f5b82e" /><path d="M4 19v-7c0-1 0-1 1-1h12c1 0 1 0 1 1v7h-4v-4H8v4z" fill="#36b4e4" /></Ico></Task>
      <Task $open aria-label="edge"><Ico w={22} h={22}><path d="M1 12C2 4 6 1 11 1c6 0 10 4 10 9v3H8c0 3 3 5 6 5 2 0 4-1 6-2v4c-2 1-4 2-7 2-6 0-9-4-9-8 0-3 2-6 5-7-1 1-2 2-2 3h8c0-3-2-4-5-4-3 0-7 2-9 6z" fill="#0c7ad8" /></Ico></Task>
      <Task $w={48} $on aria-label="AutoCAD">
        <Drawn width="24" height="24" viewBox="0 0 24 24"><defs><linearGradient id="tile" x2="0" y2="1"><stop offset="0" stopColor="#fff4ea" /><stop offset=".5" stopColor="#f0a4a4" /><stop offset="1" stopColor="#ec3030" /></linearGradient></defs><path d="M0 0h24v24H0z" fill="url(#tile)" /><path d="M12 3l8 16-4-1-3-4-5 4-4 1z" fill="#ad1a1e" /><path d="M12 3l2 8 6 8z" fill="#831016" /></Drawn>
      </Task>
      <Task $w={50} $open aria-label="snipping tool"><Ico w={24} h={24}><ellipse cx="10" cy="15" rx="9" ry="4.500" fill="#66686c" transform="rotate(-10 10 15)" /><ellipse cx="13" cy="9" rx="10" ry="6" fill="#fff" stroke="#d94a42" strokeWidth="1.500" transform="rotate(-18 13 9)" /><path d="M10 7l6 8M19 5l-3 10" stroke="#8b8d92" /><circle cx="15" cy="19" r="2.500" stroke="#1979c4" strokeWidth="1.500" /><circle cx="20" cy="16" r="2.500" stroke="#1979c4" strokeWidth="1.500" /></Ico></Task>
      <Tray>
        <TrayIcon label="people"><circle cx="6" cy="8" r="2.500" stroke="#fff" /><path d="M2 16c0-6 8-6 8 0" stroke="#fff" /><circle cx="12" cy="4" r="2.500" stroke="#fff" /><path d="M9 8c4-3 7 0 7 4" stroke="#fff" /></TrayIcon>
        <Button $w={12} aria-hidden="true" />
        <TrayIcon label="camera"><path d="M1 5l10-1v8l-9 1zM12 8l5-2v6l-5-1z" fill="#8f8f8f" /><path d="M3 7h6M4 10h5M6 13v2" stroke="#eee" /></TrayIcon>
        <TrayIcon label="sound"><path d="M2 7h3l5-5v14l-5-5H2z" fill="#e86444" stroke="#f3b09e" strokeWidth=".6" /><path d="M13 5v8" stroke="#5b1a12" /></TrayIcon>
        <TrayIcon label="defender"><path d="M9 1l7 2v6c0 4-3 6-7 8-4-2-7-4-7-8V3z" fill="#fff" /><path d="M9 1v15M2 8.500h14" stroke="#333" /><path d="M12 8l5 9H7z" fill="#ffc91e" /><path d="M12 11v3M12 15v1" stroke="#222" /></TrayIcon>
        <TrayIcon label="volume"><path d="M1.500 7h3l4-4v12l-4-4h-3z" stroke="#fff" /><path d="M11 6c2 2 2 4 0 6M13 4c3 3 3 7 0 10M15 2c4 4 4 10 0 14" stroke="#fff" /></TrayIcon>
        <TrayIcon label="battery"><path d="M6.500 5.500h9v8H5M17 8v3M2 3v3M5 3v3M1 6h5v2H1zM3.500 8v4" stroke="#fff" /><path d="M8 7h6v5H6z" fill="#fff" /></TrayIcon>
        <TrayIcon label="guard"><path d="M9 1l8 2v5c0 5-4 8-8 10-4-2-8-5-8-10V3z" fill="#fff" /><path d="M9 3l6 1v4c0 4-3 6-6 8-3-2-6-4-6-8V4z" fill="#2a80ea" /><path d="M5 7l4 4 4-4" stroke="#fff" strokeWidth="2" /></TrayIcon>
        <TrayIcon label="network"><path d="M4 16C4 9 9 4 16 4M7 16c0-5 4-9 9-9M10 16c0-3 3-6 6-6" stroke="#ddd" /><circle cx="14.500" cy="14.500" r="1.500" fill="#fff" /></TrayIcon>
        <Button $w={34}>ENG</Button>
        <Clock>22:26<br />2019-1-25</Clock>
        <Button $w={34} aria-label="notifications"><Ico w={18} h={18}><path d="M1.500 2.500h15v11h-4L9 16.500v-3H1.500z" stroke="#fff" /></Ico></Button>
        <DesktopEdge />
      </Tray>
    </Taskbar>
  );
}

export default function AutoCad() {
  return (
    <App>
      <GlobalStyle />
      <TopBar />
      <RibbonArea />
      <Canvas />
      <Status />
      <WindowsBar />
    </App>
  );
}
